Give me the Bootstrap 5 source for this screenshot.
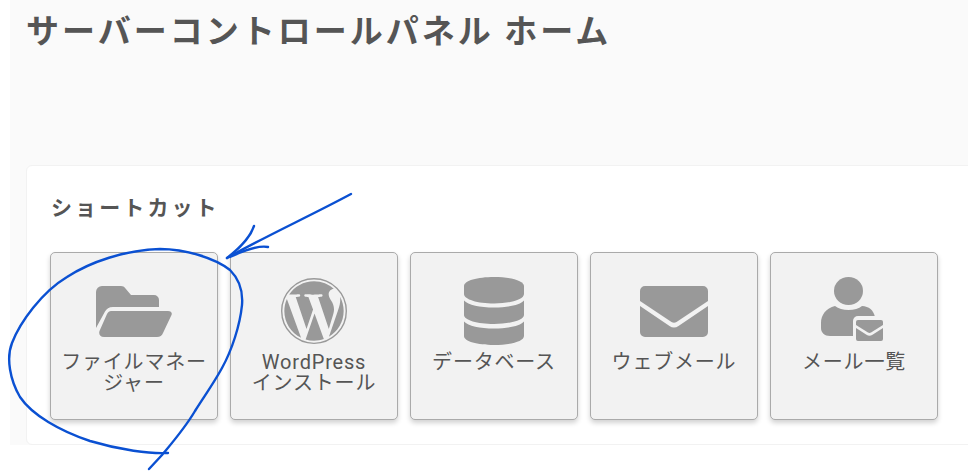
<!DOCTYPE html>
<html lang="ja">
<head>
  <meta charset="UTF-8" />
  <meta name="viewport" content="width=device-width, initial-scale=1" />
  <title>サーバーコントロールパネル ホーム</title>
  <link href="https://cdn.jsdelivr.net/npm/bootstrap@5.3.0/dist/css/bootstrap.min.css" rel="stylesheet" />
  <style>
    body {
      font-family: "Roboto", "Noto Sans CJK JP", sans-serif;
      background: #fff;
      color: #555;
      overflow: hidden;
      height: 471px;
    }
    .panel-page {
      margin-left: 10px;
      height: 445px;
      background: #fafafa;
      padding: 0 0 0 16px;
    }
    .panel-title {
      height: 165px;
      margin: 0;
      padding-top: 8px;
      font-size: 33px;
      line-height: 42px;
      font-weight: 700;
      letter-spacing: 3px;
      color: #555;
      font-family: "Noto Sans CJK JP", sans-serif;
    }
    .shortcut-box {
      height: 280px;
      margin-right: -20px;
      border: 1px solid #f2f2f2;
      border-radius: 6px;
      background: #fff;
      padding: 25px 23px 0;
    }
    .shortcut-head {
      margin: 0 0 31px 1px;
      font-size: 21px;
      line-height: 30px;
      font-weight: 700;
      letter-spacing: 3.1px;
      color: #555;
      font-family: "Noto Sans CJK JP", sans-serif;
    }
    .tile-row { gap: 12px; }
    .tile {
      width: 168px;
      height: 168px;
      padding: 24px 6px 0;
      border: 1px solid #aaa;
      border-radius: 5px;
      background: #f2f2f2;
      box-shadow: 0 3px 5px rgba(0, 0, 0, .18);
      color: #555;
      text-decoration: none;
      text-align: center;
    }
    .tile-icon {
      height: 68px;
      margin-bottom: 7px;
    }
    .tile-icon svg { fill: #999; display: block; }
    .mail-person { margin-right: 4px; align-self: flex-start; }
    .tile-label {
      font-size: 20px;
      line-height: 21px;
      letter-spacing: .8px;
    }
    .label-keep { word-break: keep-all; }
    .pen-marks {
      position: absolute;
      left: 0;
      top: 0;
      pointer-events: none;
    }
  </style>
</head>
<body>
  <div class="panel-page">
    <h1 class="panel-title">サーバーコントロールパネル ホーム</h1>
    <div class="shortcut-box">
      <h2 class="shortcut-head">ショートカット</h2>
      <div class="d-flex tile-row">
        <a class="tile d-flex flex-column" href="#">
          <div class="tile-icon d-flex align-items-center justify-content-center">
            <svg width="76" height="51" viewBox="0 0 76 51"><path d="M0 6a6 6 0 0 1 6-6h19c2 0 3 .7 4.5 2.5L35 9h23a5 5 0 0 1 5 5v7H17c-4 0-6.5 2-8 4.5L0 42z"/><path d="M15 25h57c3 0 4.500 2 3.500 4L67 47c-1 2.500-3 4-6 4H8c-4 0-5.500-3-4.500-6L11 28c1-2 2.500-3 4-3z"/></svg>
          </div>
          <div class="tile-label">ファイルマネージャー</div>
        </a>
        <a class="tile d-flex flex-column" href="#">
          <div class="tile-icon d-flex align-items-center justify-content-center">
            <svg width="66" height="66" viewBox="0 0 24 24"><circle cx="12" cy="12" r="11.75" fill="none" stroke="#999" stroke-width=".5"/><path d="M21.469 6.825c.84 1.537 1.318 3.3 1.318 5.175 0 3.979-2.156 7.456-5.363 9.325l3.295-9.527c.615-1.54.82-2.771.82-3.864 0-.405-.026-.78-.07-1.11m-7.981.105c.647-.03 1.232-.105 1.232-.105.582-.075.514-.93-.067-.899 0 0-1.755.135-2.88.135-1.064 0-2.85-.15-2.85-.15-.585-.03-.661.855-.075.885 0 0 .54.061 1.125.09l1.68 4.605-2.37 7.08L5.354 6.9c.649-.03 1.234-.1 1.234-.1.585-.075.516-.93-.065-.896 0 0-1.746.138-2.874.138-.2 0-.438-.008-.69-.015C4.911 3.15 8.235 1.215 12 1.215c2.809 0 5.365 1.072 7.286 2.833-.046-.003-.091-.009-.141-.009-1.06 0-1.812.923-1.812 1.914 0 .89.513 1.643 1.06 2.531.411.72.89 1.643.89 2.977 0 .915-.354 1.994-.821 3.479l-1.075 3.585-3.9-11.61.001.014zM12 22.784c-1.059 0-2.081-.153-3.048-.437l3.237-9.406 3.315 9.087c.024.053.05.101.078.149-1.12.393-2.325.609-3.582.609M1.211 12c0-1.564.336-3.05.935-4.39L7.29 21.709C3.694 19.96 1.212 16.271 1.211 12"/></svg>
          </div>
          <div class="tile-label label-keep">WordPress インストール</div>
        </a>
        <a class="tile d-flex flex-column" href="#">
          <div class="tile-icon d-flex align-items-center justify-content-center">
            <svg width="60" height="68" viewBox="0 0 60 68"><path d="M30 0c16.500 0 30 3.600 30 9v8c0 5.400-13.500 9.500-30 9.500S0 22.400 0 17V9C0 3.600 13.500 0 30 0z"/><path d="M0 23.500C4 28 16 30.500 30 30.500S56 28 60 23.500V38c0 5-13.500 9-30 9S0 43 0 38z"/><path d="M0 44.500C4 49 16 51.500 30 51.500S56 49 60 44.500V59c0 5.400-13.500 9-30 9S0 64.400 0 59z"/></svg>
          </div>
          <div class="tile-label">データベース</div>
        </a>
        <a class="tile d-flex flex-column" href="#">
          <div class="tile-icon d-flex align-items-center justify-content-center">
            <svg width="68" height="51" viewBox="0 0 68 51"><path d="M5 0h58a5 5 0 0 1 5 5v10L36.500 36a4.500 4.500 0 0 1-5 0L0 15V5a5 5 0 0 1 5-5z"/><path d="M0 20l29.500 20a8 8 0 0 0 9 0L68 20v26a5 5 0 0 1-5 5H5a5 5 0 0 1-5-5z"/></svg>
          </div>
          <div class="tile-label">ウェブメール</div>
        </a>
        <a class="tile d-flex flex-column" href="#">
          <div class="tile-icon d-flex align-items-center justify-content-center">
            <svg class="mail-person" width="62" height="64" viewBox="0 0 62 64"><ellipse cx="27.500" cy="14" rx="14.500" ry="14"/><path d="M14 29c3.500 2.800 8 4 13.500 4S38 31.800 41 29c7 .5 11.500 4 13 11v19H9c-5.500 0-9-3.500-9-8v-5c0-8 5-15 14-17z"/><rect x="32" y="39" width="33" height="28" rx="5" fill="#f2f2f2"/><path d="M37 43h23a2 2 0 0 1 2 2v3L50 55.500a3 3 0 0 1-3 0L35 48v-3a2 2 0 0 1 2-2z"/><path d="M35 51l10.500 6.800a6 6 0 0 0 6 0L62 51v11a2 2 0 0 1-2 2H37a2 2 0 0 1-2-2z"/></svg>
          </div>
          <div class="tile-label">メール一覧</div>
        </a>
      </div>
    </div>
  </div>

  <!-- pen annotation drawn over the screenshot -->
  <svg class="pen-marks" width="968" height="471" viewBox="0 0 968 471" fill="none" stroke="#0a50d2" stroke-width="2.400" stroke-linecap="round" stroke-linejoin="round">
    <path d="M168 453C150 454 120 450 90 441C60 431 32 415 20 397C10 380 6 358 12 343C20 322 42 292 67 277C90 262 125 250 160 249C185 249 215 258 230 270C240 280 243 293 242 305C240 325 232 350 222 368C212 386 205 395 195 411C185 428 172 443 162 455L149 469" />
    <path d="M351 194C310 216 262 238 227 258" />
    <path d="M254 226C250 238 240 248 227 258" />
    <path d="M268 247C258 245 245 250 230 257" />
  </svg>
  <script src="https://cdn.jsdelivr.net/npm/bootstrap@5.3.0/dist/js/bootstrap.bundle.min.js"></script>
</body>
</html>
